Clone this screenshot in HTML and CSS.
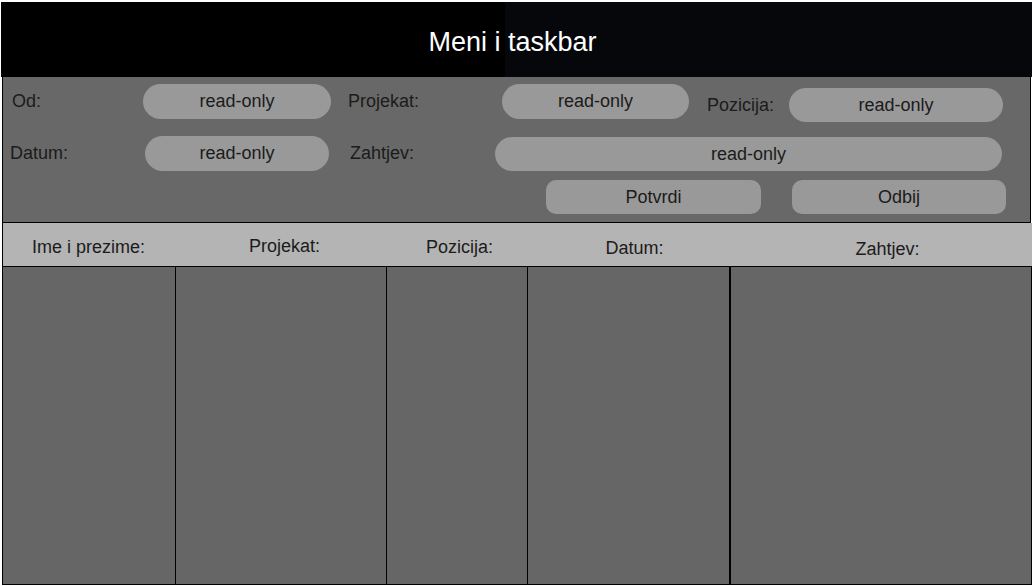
FILE: index.html
```html
<!DOCTYPE html>
<html lang="hr">
  <head>
    <title>Zahtjevi</title>
    <meta charset="utf-8" />
    <link rel="stylesheet" href="styles.css">
  </head>
  <body>
    <div class="app">
      <header class="traka">Meni i taskbar</header>

      <form action="#" class="panel">
        <div class="red red-prvi">
          <label class="oznaka w-od">Od:</label>
          <span class="polje w-p1">read-only</span>
          <label class="oznaka w-proj">Projekat:</label>
          <span class="polje w-p2">read-only</span>
          <label class="oznaka w-poz nize">Pozicija:</label>
          <span class="polje w-p3 nize">read-only</span>
        </div>
        <div class="red red-drugi">
          <label class="oznaka w-dat">Datum:</label>
          <span class="polje w-p4">read-only</span>
          <label class="oznaka w-zah">Zahtjev:</label>
          <span class="polje w-p5">read-only</span>
        </div>
        <div class="red red-gumbi">
          <button type="button" class="gumb potvrdi">Potvrdi</button>
          <button type="button" class="gumb odbij">Odbij</button>
        </div>
      </form>

      <div class="tablica">
        <div class="zaglavlje">
          <span class="z1">Ime i prezime:</span>
          <span class="z2">Projekat:</span>
          <span class="z3">Pozicija:</span>
          <span class="z4">Datum:</span>
          <span class="z5">Zahtjev:</span>
        </div>
        <div class="tijelo">
          <div class="stupac"></div>
          <div class="stupac"></div>
          <div class="stupac"></div>
          <div class="stupac deblji"></div>
          <div class="stupac zadnji"></div>
        </div>
      </div>
    </div>
  </body>
</html>
```

FILE: styles.css
```css
body {
  margin: 0;
  background: #ffffff;
  font-family: "Liberation Sans", Arial, sans-serif;
  font-size: 18px;
  color: #1b1b1b;
}

.app {
  margin: 2px 0 0 1px;
  width: 1031px;
}

.traka {
  height: 75px;
  display: flex;
  align-items: center;
  justify-content: center;
  background: linear-gradient(to right, #000000 504px, #05070a 504px);
  color: #ffffff;
  font-size: 27px;
  padding: 5px 8px 0 0;
  box-sizing: border-box;
}

.panel {
  margin: 0 0 0 1px;
  width: 1029px;
  height: 146px;
  box-sizing: border-box;
  background: #686868;
  border-left: 1px solid #000;
  border-right: 1px solid #000;
  border-bottom: 1px solid #000;
  padding-top: 7px;
}

.red {
  display: flex;
  align-items: flex-start;
}

.red-drugi {
  margin-top: 14px;
}

.red-gumbi {
  margin-top: 9px;
  padding-left: 543px;
}

.oznaka {
  box-sizing: border-box;
  line-height: 34px;
}

.w-od { width: 140px; padding-left: 9px; }
.w-proj { width: 171px; padding-left: 17px; }
.w-poz { width: 100px; padding-left: 18px; }
.w-dat { width: 142px; padding-left: 7px; }
.w-zah { width: 166px; padding-left: 21px; }

.nize {
  margin-top: 4px;
}

.polje {
  height: 35px;
  border-radius: 18px;
  background: #999999;
  display: flex;
  align-items: center;
  justify-content: center;
}

.w-p1 { width: 188px; }
.w-p2 { width: 187px; }
.w-p3 { width: 214px; height: 34px; }
.w-p4 { width: 184px; }
.w-p5 { width: 507px; height: 34px; margin-top: 1px; }

.gumb {
  height: 34px;
  width: 215px;
  border: none;
  border-radius: 10px;
  background: #999999;
  font-family: inherit;
  font-size: 18px;
  color: #1b1b1b;
  padding: 0;
}

.odbij {
  margin-left: 31px;
  width: 214px;
}

.tablica {
  margin-left: 1px;
  width: 1030px;
}

.zaglavlje,
.tijelo {
  display: grid;
  grid-template-columns: 173px 211px 141px 203px 1fr;
}

.zaglavlje {
  height: 44px;
  box-sizing: border-box;
  background: #b4b4b4;
  border-left: 1px solid #000;
  border-bottom: 1px solid #000;
  padding-top: 5px;
  align-items: center;
  text-align: center;
}

.z1 { padding-right: 2px; }
.z2 { padding-left: 6px; margin-top: -2px; }
.z3 { padding-left: 4px; }
.z4 { padding-left: 10px; margin-top: 2px; }
.z5 { padding-left: 12px; margin-top: 4px; }

.tijelo {
  height: 318px;
  box-sizing: border-box;
  background: #666666;
  border-left: 1px solid #000;
  border-bottom: 1px solid #000;
}

.stupac {
  border-right: 1px solid #000;
}

.stupac.deblji {
  border-right-width: 2px;
}
```
